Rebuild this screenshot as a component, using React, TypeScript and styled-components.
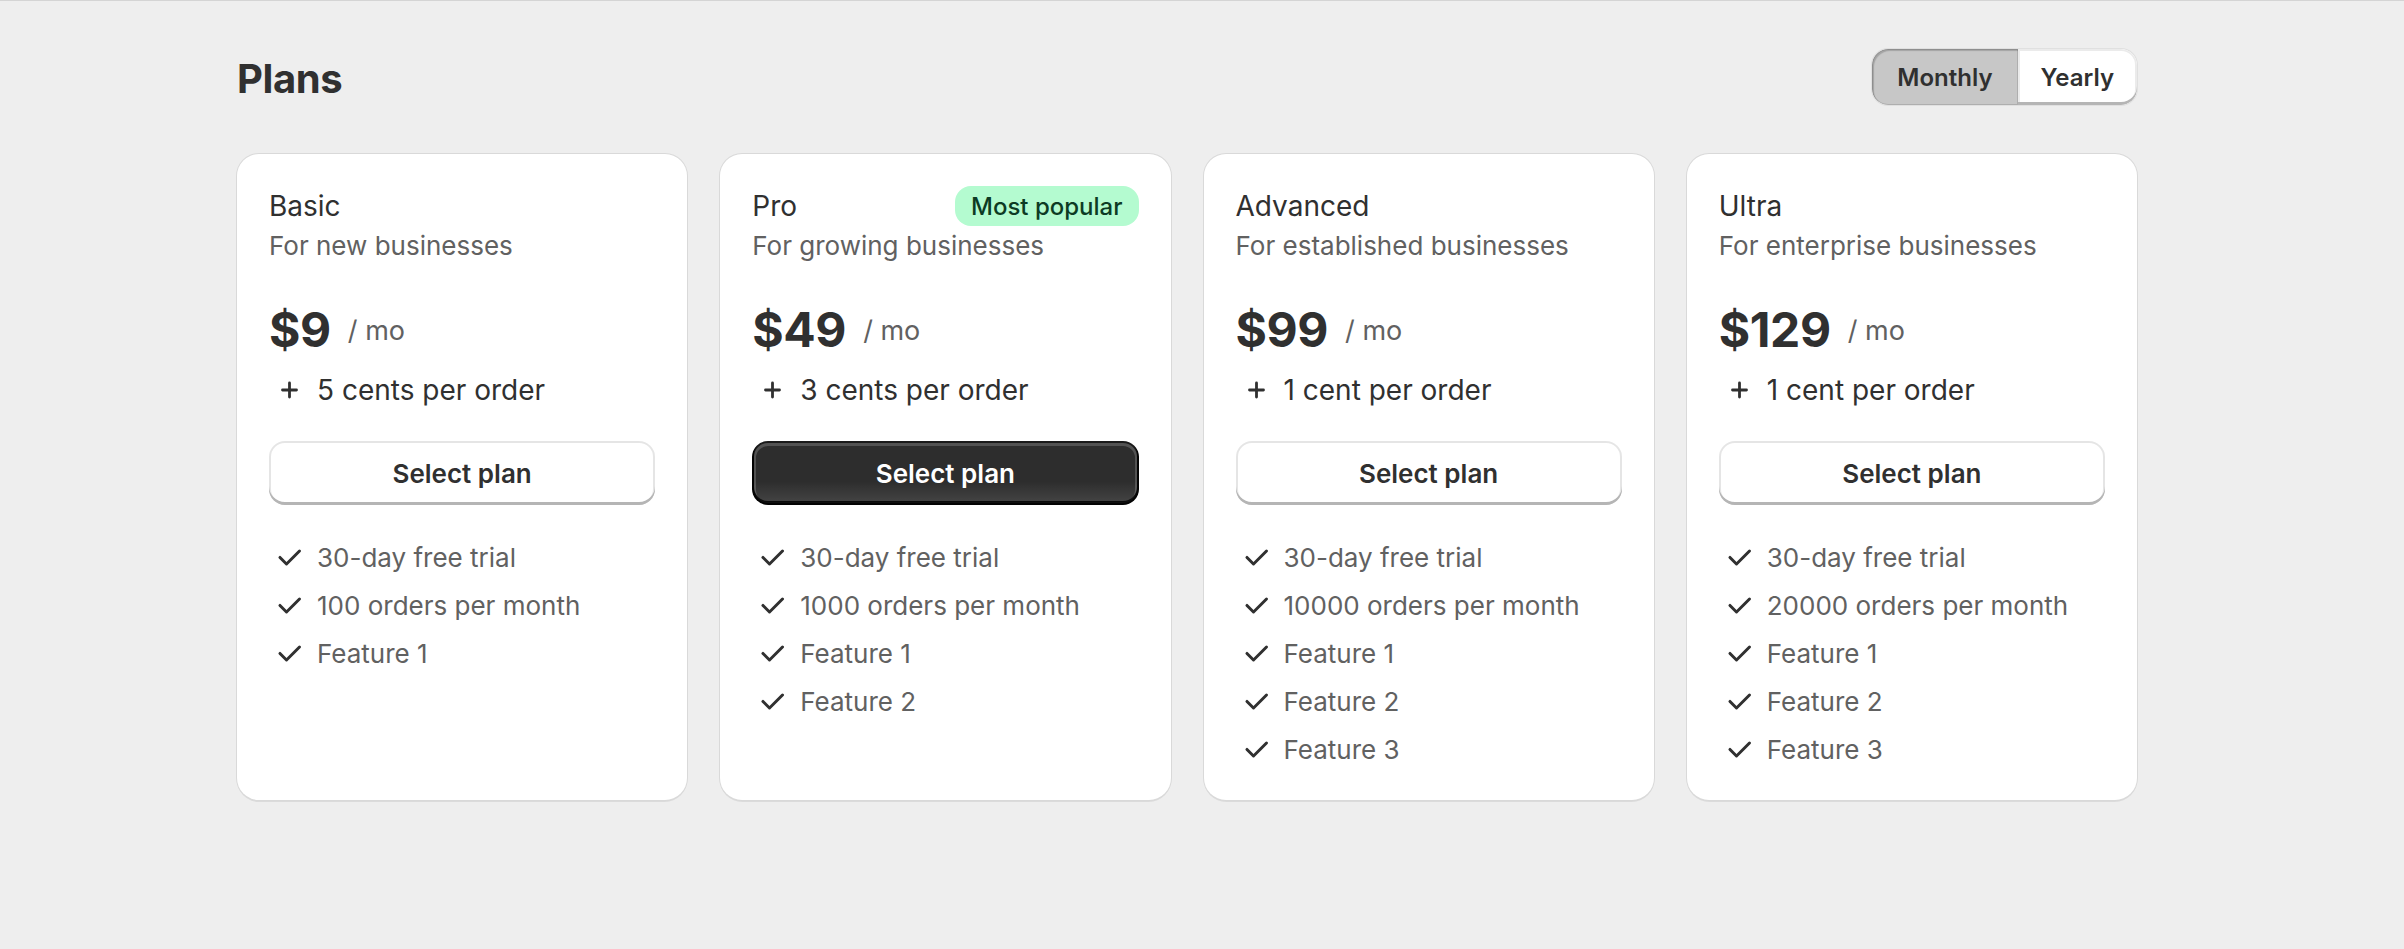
import React from "react";
import styled, { createGlobalStyle } from "styled-components";

const GlobalStyle = createGlobalStyle`
  html, body {
    margin: 0;
    padding: 0;
    background: #eeeeee;
  }
  body {
    font-family: Inter, "Noto Sans", "Liberation Sans", sans-serif;
    color: #303030;
    -webkit-font-smoothing: antialiased;
  }
  * { box-sizing: border-box; }
`;

const Page = styled.div`
  min-height: 100vh;
  border-top: 1px solid #d4d4d4;
  display: flex;
  justify-content: center;
  padding-right: 30px;
`;

const Container = styled.div`
  width: 1900px;
  padding-top: 48px;
`;

const Header = styled.header`
  display: flex;
  align-items: center;
  justify-content: space-between;
  height: 56px;
`;

const Title = styled.h1`
  margin: 0;
  padding-top: 3px;
  font-size: 40px;
  line-height: 48px;
  font-weight: 700;
  color: #303030;
  letter-spacing: -0.4px;
`;

const Segmented = styled.div`
  display: flex;
  height: 56px;
  border-radius: 16px;
  overflow: hidden;
  box-shadow: 0 0 0 1px rgba(0, 0, 0, 0.06);
`;

const Segment = styled.button<{ $pressed?: boolean }>`
  font-family: inherit;
  font-size: 24px;
  font-weight: 600;
  color: #303030;
  border: none;
  margin: 0;
  padding: 0 ${(p) => (p.$pressed ? "25px" : "23px")};
  cursor: pointer;
  background: ${(p) => (p.$pressed ? "#c7c7c7" : "#ffffff")};
  box-shadow: ${(p) =>
    p.$pressed
      ? "inset 2px 2px 1px rgba(0,0,0,0.18), inset 0 0 0 1px rgba(0,0,0,0.12)"
      : "inset 0 -3px 0 0 #b5b5b5, inset 0 0 0 2px rgba(0,0,0,0.08), inset 0 1px 0 3px #fff"};
  border-radius: ${(p) => (p.$pressed ? "16px 0 0 16px" : "0 16px 16px 0")};
`;

const Grid = styled.div`
  display: grid;
  grid-template-columns: repeat(4, 1fr);
  gap: 33px;
  margin-top: 49px;
  align-items: stretch;
`;

const Card = styled.section`
  background: #ffffff;
  border-radius: 22px;
  padding: 32px 32px 30px;
  display: flex;
  flex-direction: column;
  box-shadow: 0 0 0 1px #d9d9d9, 0 2px 0 0 rgba(0, 0, 0, 0.08);
`;

const NameRow = styled.div`
  display: flex;
  align-items: center;
  justify-content: space-between;
  height: 40px;
`;

const Name = styled.h2`
  margin: 0;
  font-size: 28px;
  line-height: 40px;
  font-weight: 400;
  color: #303030;
`;

const Badge = styled.span`
  height: 40px;
  display: inline-flex;
  align-items: center;
  padding: 0 16px;
  border-radius: 16px;
  background: #b4fbd0;
  color: #0d3b24;
  font-size: 24px;
  font-weight: 500;
`;

const Subtitle = styled.p`
  margin: 0;
  font-size: 26px;
  line-height: 40px;
  color: #616161;
  font-weight: 400;
`;

const PriceBlock = styled.div`
  margin-top: 32px;
  display: flex;
  flex-direction: column;
  gap: 8px;
`;

const PriceRow = styled.div`
  display: flex;
  align-items: center;
  gap: 17px;
  height: 64px;
`;

const Price = styled.span`
  font-size: 48px;
  line-height: 64px;
  font-weight: 700;
  color: #303030;
  letter-spacing: -0.4px;
`;

const Period = styled.span`
  font-size: 27px;
  line-height: 40px;
  color: #616161;
  padding-top: 2px;
`;

const IconRow = styled.div<{ $muted?: boolean }>`
  display: flex;
  align-items: center;
  gap: 8px;
  font-size: ${(p) => (p.$muted ? "26px" : "28px")};
  line-height: 40px;
  color: ${(p) => (p.$muted ? "#616161" : "#303030")};
`;

const IconBox = styled.span`
  width: 40px;
  height: 40px;
  flex: none;
  display: inline-flex;
  align-items: center;
  justify-content: center;
  color: #303030;
`;

const SelectButton = styled.button<{ $primary?: boolean }>`
  margin-top: 31px;
  height: 64px;
  width: 100%;
  border: none;
  border-radius: 16px;
  font-family: inherit;
  font-size: 26px;
  font-weight: 600;
  cursor: pointer;
  color: ${(p) => (p.$primary ? "#ffffff" : "#303030")};
  background: ${(p) =>
    p.$primary
      ? "linear-gradient(180deg, rgba(48,48,48,0) 63%, rgba(255,255,255,0.12) 100%), #2d2d2d"
      : "#ffffff"};
  box-shadow: ${(p) =>
    p.$primary
      ? "inset 0 -2px 0 2px rgba(0,0,0,0.85), inset 0 0 0 2px #1a1a1a, inset 0 1px 0 4px rgba(255,255,255,0.18)"
      : "inset 0 -3px 0 0 #b5b5b5, inset 0 0 0 2px rgba(0,0,0,0.1), inset 0 1px 0 3px #fff"};
`;

const Features = styled.ul`
  list-style: none;
  margin: 33px 0 0;
  padding: 0;
  display: flex;
  flex-direction: column;
  gap: 8px;
`;

const CheckIcon = () => (
  <svg width="40" height="40" viewBox="0 0 20 20" fill="currentColor">
    <path d="M15.78 5.97a.75.75 0 0 1 0 1.06l-6.5 6.5a.75.75 0 0 1-1.06 0l-3.25-3.25a.75.75 0 1 1 1.06-1.06l2.72 2.72 5.97-5.97a.75.75 0 0 1 1.06 0Z" />
  </svg>
);

const PlusIcon = () => (
  <svg width="40" height="40" viewBox="0 0 40 40" fill="none" stroke="currentColor" strokeWidth="2.8" strokeLinecap="round">
    <path d="M20.5 13v14M13.5 20h14" />
  </svg>
);

type Plan = {
  name: string;
  subtitle: string;
  price: string;
  perOrder: string;
  features: string[];
  popular?: boolean;
};

const plans: Plan[] = [
  {
    name: "Basic",
    subtitle: "For new businesses",
    price: "$9",
    perOrder: "5 cents per order",
    features: ["30-day free trial", "100 orders per month", "Feature 1"],
  },
  {
    name: "Pro",
    subtitle: "For growing businesses",
    price: "$49",
    perOrder: "3 cents per order",
    features: ["30-day free trial", "1000 orders per month", "Feature 1", "Feature 2"],
    popular: true,
  },
  {
    name: "Advanced",
    subtitle: "For established businesses",
    price: "$99",
    perOrder: "1 cent per order",
    features: ["30-day free trial", "10000 orders per month", "Feature 1", "Feature 2", "Feature 3"],
  },
  {
    name: "Ultra",
    subtitle: "For enterprise businesses",
    price: "$129",
    perOrder: "1 cent per order",
    features: ["30-day free trial", "20000 orders per month", "Feature 1", "Feature 2", "Feature 3"],
  },
];

export default function App() {
  return (
    <>
      <GlobalStyle />
      <Page>
        <Container>
          <Header>
            <Title>Plans</Title>
            <Segmented>
              <Segment $pressed>Monthly</Segment>
              <Segment>Yearly</Segment>
            </Segmented>
          </Header>
          <Grid>
            {plans.map((plan) => (
              <Card key={plan.name}>
                <NameRow>
                  <Name>{plan.name}</Name>
                  {plan.popular && <Badge>Most popular</Badge>}
                </NameRow>
                <Subtitle>{plan.subtitle}</Subtitle>
                <PriceBlock>
                  <PriceRow>
                    <Price>{plan.price}</Price>
                    <Period>/ mo</Period>
                  </PriceRow>
                  <IconRow>
                    <IconBox>
                      <PlusIcon />
                    </IconBox>
                    {plan.perOrder}
                  </IconRow>
                </PriceBlock>
                <SelectButton $primary={plan.popular}>Select plan</SelectButton>
                <Features>
                  {plan.features.map((f) => (
                    <IconRow as="li" key={f} $muted>
                      <IconBox>
                        <CheckIcon />
                      </IconBox>
                      {f}
                    </IconRow>
                  ))}
                </Features>
              </Card>
            ))}
          </Grid>
        </Container>
      </Page>
    </>
  );
}
